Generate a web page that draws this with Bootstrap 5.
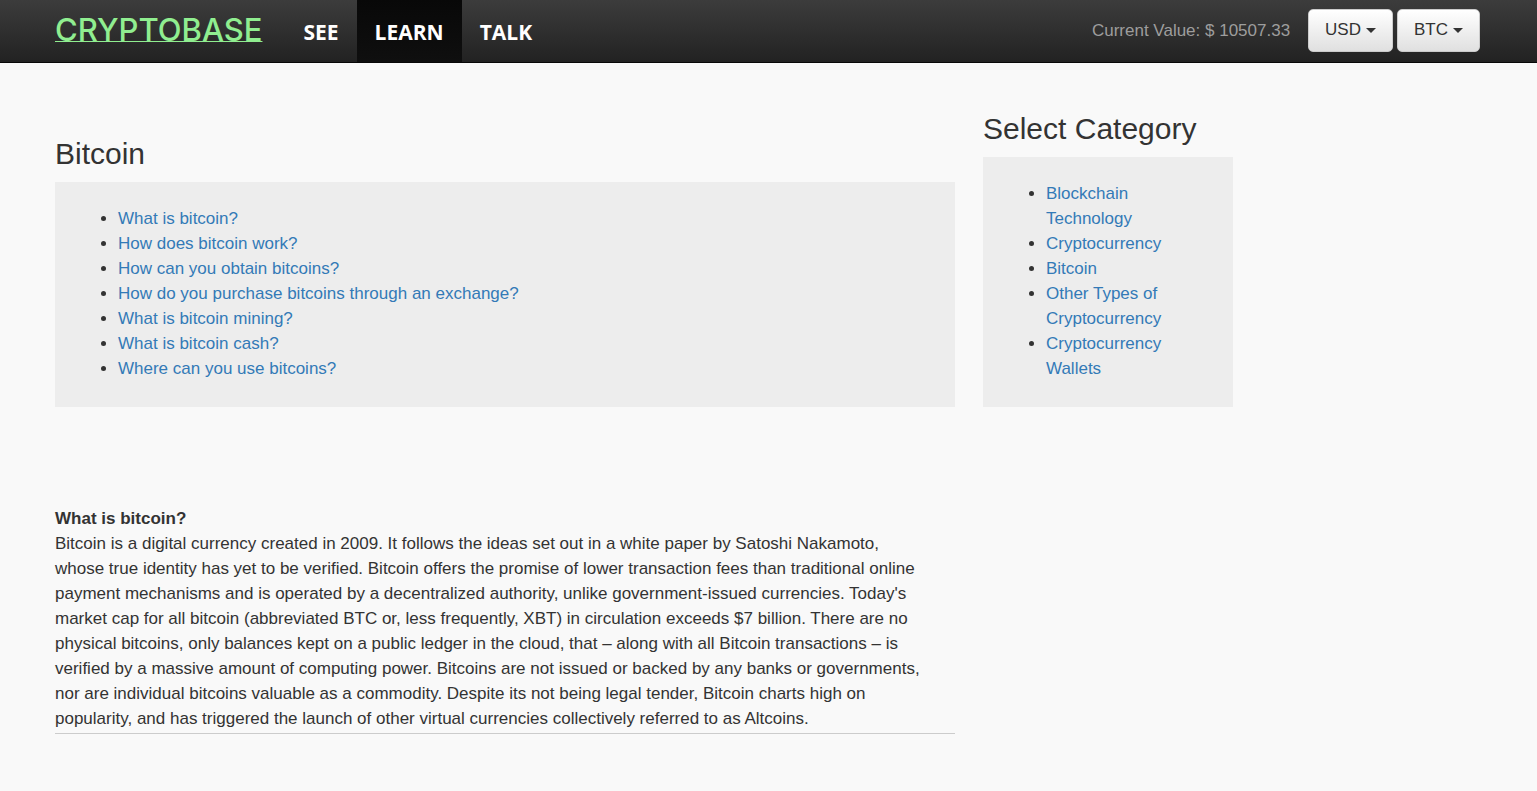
<!DOCTYPE html>
<html lang="en">
<head>
<meta charset="utf-8">
<meta name="viewport" content="width=device-width, initial-scale=1">
<title>Cryptobase</title>
<link href="https://cdn.jsdelivr.net/npm/bootstrap@5.3.0/dist/css/bootstrap.min.css" rel="stylesheet">
<style>
:root { --page-gutter: 55px; }
body {
  background: #f9f9f9;
  color: #333;
  font: 17px/25px "Liberation Sans", Arial, sans-serif;
}
a { color: #337ab7; text-decoration: none; }
a:hover { text-decoration: underline; }
.site-bar {
  min-height: 63px;
  padding: 0 57px 0 var(--page-gutter);
  background: linear-gradient(#3c3c3c, #222);
  border-bottom: 1px solid #080808;
}
.site-logo {
  margin-right: 23px;
  padding: 0 0 2px;
  color: #90ee90;
  font: 500 31px/40px Inter, sans-serif;
  text-decoration: underline #90ee90 1px;
  text-underline-offset: 0;
  text-decoration-skip-ink: none;
}
.site-logo:hover, .site-logo:focus { color: #90ee90; }
.site-bar .navbar-nav .nav-link {
  padding: 20px 18px 17px;
  color: #fff;
  font: bold 21px/25px "Open Sans", sans-serif;
}
.site-bar .navbar-nav .nav-link.active { background: linear-gradient(#080808, #0f0f0f); }
.site-tools { padding-bottom: 2px; }
.ticker { margin-right: 18px; color: #9d9d9d; }
.btn-coin {
  padding: 7px 16px 9px;
  background: linear-gradient(#fff, #e0e0e0);
  border: 1px solid #ccc;
  border-radius: 5px;
  color: #333;
  font-size: 17px;
  line-height: 25px;
  box-shadow: inset 0 1px 0 #fff;
}
.btn-coin::after { margin-left: 5px; border-width: 5px 5px 0; vertical-align: 2px; }
.page-body { padding: 48px var(--page-gutter) 0; }
.section-title { margin: 0 0 10px; font-size: 30px; line-height: 36px; font-weight: 400; }
.link-panel { padding: 24px 63px 26px; background: #ededed; }
.link-panel ul { padding: 0; }
.topic-column { flex: 0 1 900px; padding-top: 25px; }
.category-column { flex: 0 0 250px; margin-left: 28px; }
.answer { margin-top: 99px; border-bottom: 1px solid #ccc; }
.answer p { padding: 0 28px 2px 0; }
</style>
<script src="https://cdn.jsdelivr.net/npm/bootstrap@5.3.0/dist/js/bootstrap.bundle.min.js"></script>
</head>
<body>
<nav class="navbar navbar-expand site-bar">
  <a class="navbar-brand site-logo" href="#">CRYPTOBASE</a>
  <div class="navbar-nav me-auto">
    <a class="nav-link" href="#">SEE</a>
    <a class="nav-link active" aria-current="page" href="#">LEARN</a>
    <a class="nav-link" href="#">TALK</a>
  </div>
  <div class="site-tools d-flex align-items-center">
    <span class="ticker">Current Value: $ 10507.33</span>
    <button type="button" class="btn btn-coin dropdown-toggle">USD</button>
    <button type="button" class="btn btn-coin dropdown-toggle ms-1">BTC</button>
  </div>
</nav>
<div class="page-body d-flex align-items-start">
  <main class="topic-column">
    <h1 class="section-title">Bitcoin</h1>
    <div class="link-panel">
      <ul class="mb-0">
        <li><a href="#what">What is bitcoin?</a></li>
        <li><a href="#">How does bitcoin work?</a></li>
        <li><a href="#">How can you obtain bitcoins?</a></li>
        <li><a href="#">How do you purchase bitcoins through an exchange?</a></li>
        <li><a href="#">What is bitcoin mining?</a></li>
        <li><a href="#">What is bitcoin cash?</a></li>
        <li><a href="#">Where can you use bitcoins?</a></li>
      </ul>
    </div>
    <section class="answer" id="what">
      <strong>What is bitcoin?</strong>
      <p class="mb-0">Bitcoin is a digital currency created in 2009. It follows the ideas set out in a white paper by Satoshi Nakamoto, whose true identity has yet to be verified. Bitcoin offers the promise of lower transaction fees than traditional online payment mechanisms and is operated by a decentralized authority, unlike government-issued currencies. Today's market cap for all bitcoin (abbreviated BTC or, less frequently, XBT) in circulation exceeds $7 billion. There are no physical bitcoins, only balances kept on a public ledger in the cloud, that – along with all Bitcoin transactions – is verified by a massive amount of computing power. Bitcoins are not issued or backed by any banks or governments, nor are individual bitcoins valuable as a commodity. Despite its not being legal tender, Bitcoin charts high on popularity, and has triggered the launch of other virtual currencies collectively referred to as Altcoins.</p>
    </section>
  </main>
  <aside class="category-column">
    <h2 class="section-title">Select Category</h2>
    <div class="link-panel">
      <ul class="mb-0">
        <li><a href="#">Blockchain Technology</a></li>
        <li><a href="#">Cryptocurrency</a></li>
        <li><a href="#">Bitcoin</a></li>
        <li><a href="#">Other Types of Cryptocurrency</a></li>
        <li><a href="#">Cryptocurrency Wallets</a></li>
      </ul>
    </div>
  </aside>
</div>
</body>
</html>
